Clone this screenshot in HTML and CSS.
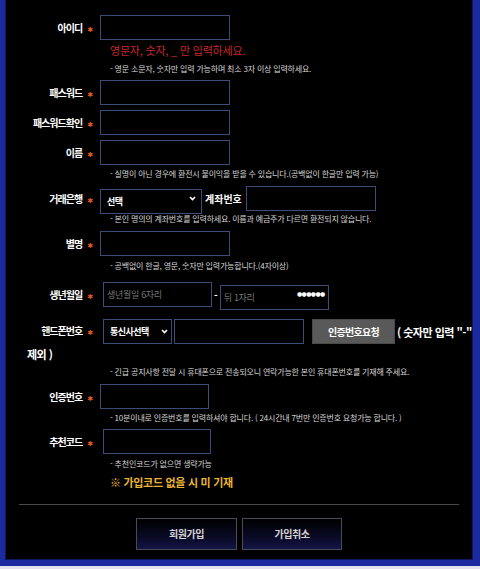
FILE: index.html
```html
<!DOCTYPE html>
<html lang="ko">
<head>
<meta charset="UTF-8">
<meta name="viewport" content="width=device-width, initial-scale=1.0">
<title>회원가입</title>
<link rel="stylesheet" href="styles.css">
</head>
<body>

<div id="join-box">
<form class="join-form" onsubmit="return false;">

<!-- 아이디 -->
<div class="row">
    <label class="lbl">아이디<span class="req">✱</span></label>
    <input type="text" class="inp">
</div>
<p class="note-red mt3">영문자, 숫자, _ 만 입력하세요.</p>
<p class="help mt7">- 영문 소문자, 숫자만 입력 가능하며 최소 3자 이상 입력하세요.</p>

<div class="row mt6">
    <label class="lbl">패스워드<span class="req">✱</span></label>
    <input type="password" class="inp">
</div>

<div class="row">
    <label class="lbl">패스워드확인<span class="req">✱</span></label>
    <input type="password" class="inp">
</div>

<div class="row">
    <label class="lbl">이름<span class="req">✱</span></label>
    <input type="text" class="inp">
</div>
<p class="help">- 실명이 아닌 경우에 환전시 불이익을 받을 수 있습니다.(공백없이 한글만 입력 가능)</p>

<!-- 은행 / 계좌 -->
<div class="row mt7">
    <label class="lbl">거래은행<span class="req">✱</span></label>
    <span class="sel sel-bank">
        <select><option>선택</option></select>
        <svg width="7" height="5" viewBox="0 0 7 5"><polyline points="1,1 3.5,3.5 6,1" fill="none" stroke="#fff" stroke-width="1.6"/></svg>
    </span>
    <span class="sub-lbl">계좌번호</span>
    <input type="text" class="inp inp-acct">
</div>
<p class="help mt3">- 본인 명의의 계좌번호를 입력하세요. 이름과 예금주가 다르면 환전되지 않습니다.</p>

<div class="row mt7">
    <label class="lbl">별명<span class="req">✱</span></label>
    <input type="text" class="inp">
</div>
<p class="help mt5">- 공백없이 한글, 영문, 숫자만 입력가능합니다.(4자이상)</p>

<!-- 생년월일 -->
<div class="row mt11">
    <label class="lbl">생년월일<span class="req">✱</span></label>
    <input type="text" class="inp inp-half shift" placeholder="생년월일 6자리">
    <span class="dash">-</span>
    <span class="masked">
        <input type="text" class="inp inp-half" placeholder="뒤 1자리">
        <span class="dots">●●●●●●</span>
    </span>
</div>

<!-- 핸드폰 -->
<div class="row-flow mt12"><label class="lbl">핸드폰번호<span class="req">✱</span></label><span class="sel sel-tel shift"><select><option>통신사선택</option></select><svg width="7" height="5" viewBox="0 0 7 5"><polyline points="1,1 3.5,3.5 6,1" fill="none" stroke="#fff" stroke-width="1.6"/></svg></span><input type="text" class="inp inp-tel"><button type="button" class="btn-cert">인증번호요청</button><span class="tel-note">( 숫자만 입력 "-"</span> <span class="tel-note">제외 )</span></div>
<p class="help mt6">- 긴급 공지사항 전달 시 휴대폰으로 전송되오니 연락가능한 본인 휴대폰번호를 기재해 주세요.</p>

<div class="row mt7">
    <label class="lbl">인증번호<span class="req">✱</span></label>
    <input type="text" class="inp inp-cert">
</div>
<p class="help">- 10분이내로 인증번호를 입력하셔야 합니다. ( 24시간내 7번만 인증번호 요청가능 합니다. )</p>

<div class="row mt6">
    <label class="lbl">추천코드<span class="req">✱</span></label>
    <input type="text" class="inp inp-code shift">
</div>
<p class="help mt5">- 추천인코드가 없으면 생략가능</p>
<p class="note-yellow">※ 가입코드 없을 시 미 기재</p>

<hr class="line">

<div class="btns">
    <button type="submit" class="btn-big">회원가입</button>
    <button type="button" class="btn-big btn-cancel">가입취소</button>
</div>

</form>
</div>

</body>
</html>
```

FILE: styles.css
```css
html, body {
margin: 0;
padding: 0;
}
body {
background-color: #e4e2ec;
font-family: "Noto Sans CJK KR", "Noto Sans", sans-serif;
color: #fff;
}
#join-box {
height: 560px;
background-color: #000;
border-left: 5px solid #1b2a9e;
border-right: 7px solid #1b2a9e;
border-bottom: 6px solid #1b2a9e;
box-shadow: inset 1px 0 0 #0d1660, inset -1px -1px 0 #0d1660;
}
.join-form {
padding-top: 15px;
}
p {
margin: 0;
}

/* rows */
.row {
display: flex;
align-items: center;
height: 25px;
padding-left: 22px;
margin-top: 5px;
}
.join-form > .row:first-child {
margin-top: 0;
}
.row-flow {
padding-left: 22px;
line-height: 14px;
}
.row-flow > * {
vertical-align: middle;
}
.lbl {
display: inline-block;
width: 66px;
margin-right: 7px;
text-align: right;
font-size: 10px;
font-weight: bold;
letter-spacing: -1px;
white-space: nowrap;
}
.req {
display: inline-block;
margin-left: 5px;
font-family: "DejaVu Sans", sans-serif;
font-size: 7px;
color: #e2591c;
letter-spacing: 0;
}
.shift {
margin-left: 3px;
}

/* fields */
.inp {
box-sizing: border-box;
width: 130px;
height: 25px;
padding: 0 3px;
background-color: #000;
border: 1px solid #3a4d78;
color: #fff;
font-family: inherit;
font-size: 9px;
outline: none;
}
.inp::placeholder {
color: #777;
letter-spacing: -0.3px;
}
.inp-half {
width: 109px;
}
.inp-acct {
margin-left: 4px;
}
.inp-tel {
margin-left: 2px;
}
.inp-cert {
width: 109px;
}
.inp-code {
width: 108px;
}
.sel {
position: relative;
display: inline-block;
height: 25px;
}
.sel select {
box-sizing: border-box;
width: 100%;
height: 25px;
padding: 0 0 0 6px;
-webkit-appearance: none;
appearance: none;
background-color: #000;
border: 1px solid #3a4d78;
border-radius: 0;
color: #fff;
font-family: inherit;
font-size: 9px;
font-weight: bold;
letter-spacing: -0.5px;
}
.sel svg {
position: absolute;
right: 6px;
top: 10px;
}
.sel-bank {
width: 102px;
}
.sel-tel {
width: 69px;
}
.sel-tel svg {
right: 4px;
}
.sub-lbl {
margin-left: 3px;
font-size: 10px;
font-weight: bold;
letter-spacing: 0;
}
.dash {
margin: 0 2px;
font-size: 10px;
font-weight: bold;
}
.masked {
position: relative;
display: inline-block;
height: 25px;
}
.dots {
position: absolute;
right: 4px;
top: 8px;
font-family: "DejaVu Sans", sans-serif;
font-size: 6px;
line-height: 8px;
letter-spacing: -0.6px;
color: #fff;
}
.btn-cert {
box-sizing: border-box;
width: 83px;
height: 25px;
margin-left: 8px;
background-color: #595959;
border: 1px solid #4a4a4a;
color: #fff;
font-family: inherit;
font-size: 10px;
font-weight: bold;
letter-spacing: -0.7px;
}
.tel-note {
font-size: 11px;
font-weight: bold;
letter-spacing: -0.5px;
}
.btn-cert + .tel-note {
margin-left: 2px;
}

/* texts */
.help {
margin-top: 4px;
padding-left: 105px;
font-size: 8px;
line-height: 10px;
letter-spacing: -0.2px;
color: #d6d6d6;
white-space: nowrap;
}
.note-red {
padding-left: 105px;
font-size: 11px;
line-height: 14px;
letter-spacing: -0.2px;
color: #c8262a;
}
.note-yellow {
margin-top: 6px;
padding-left: 105px;
font-size: 11px;
line-height: 14px;
font-weight: bold;
letter-spacing: -0.3px;
color: #e9b52f;
}
.line {
margin: 15px 14px 0;
height: 1px;
border: none;
background-color: #4a4a4a;
}
.btns {
display: flex;
justify-content: center;
gap: 5px;
margin-top: 13px;
}
.btn-big {
box-sizing: border-box;
width: 101px;
height: 32px;
background: linear-gradient(#000 0%, #0a0a26 60%, #141446 100%);
border: 1px solid #4b4b58;
color: #d4d4d4;
font-family: inherit;
font-size: 10px;
font-weight: bold;
letter-spacing: -0.5px;
cursor: pointer;
}
.btn-cancel {
width: 100px;
}

/* spacing */
.mt3 { margin-top: 3px; }
.mt5 { margin-top: 5px; }
.mt6 { margin-top: 6px; }
.mt7 { margin-top: 7px; }
.mt11 { margin-top: 11px; }
.mt12 { margin-top: 12px; }
```
